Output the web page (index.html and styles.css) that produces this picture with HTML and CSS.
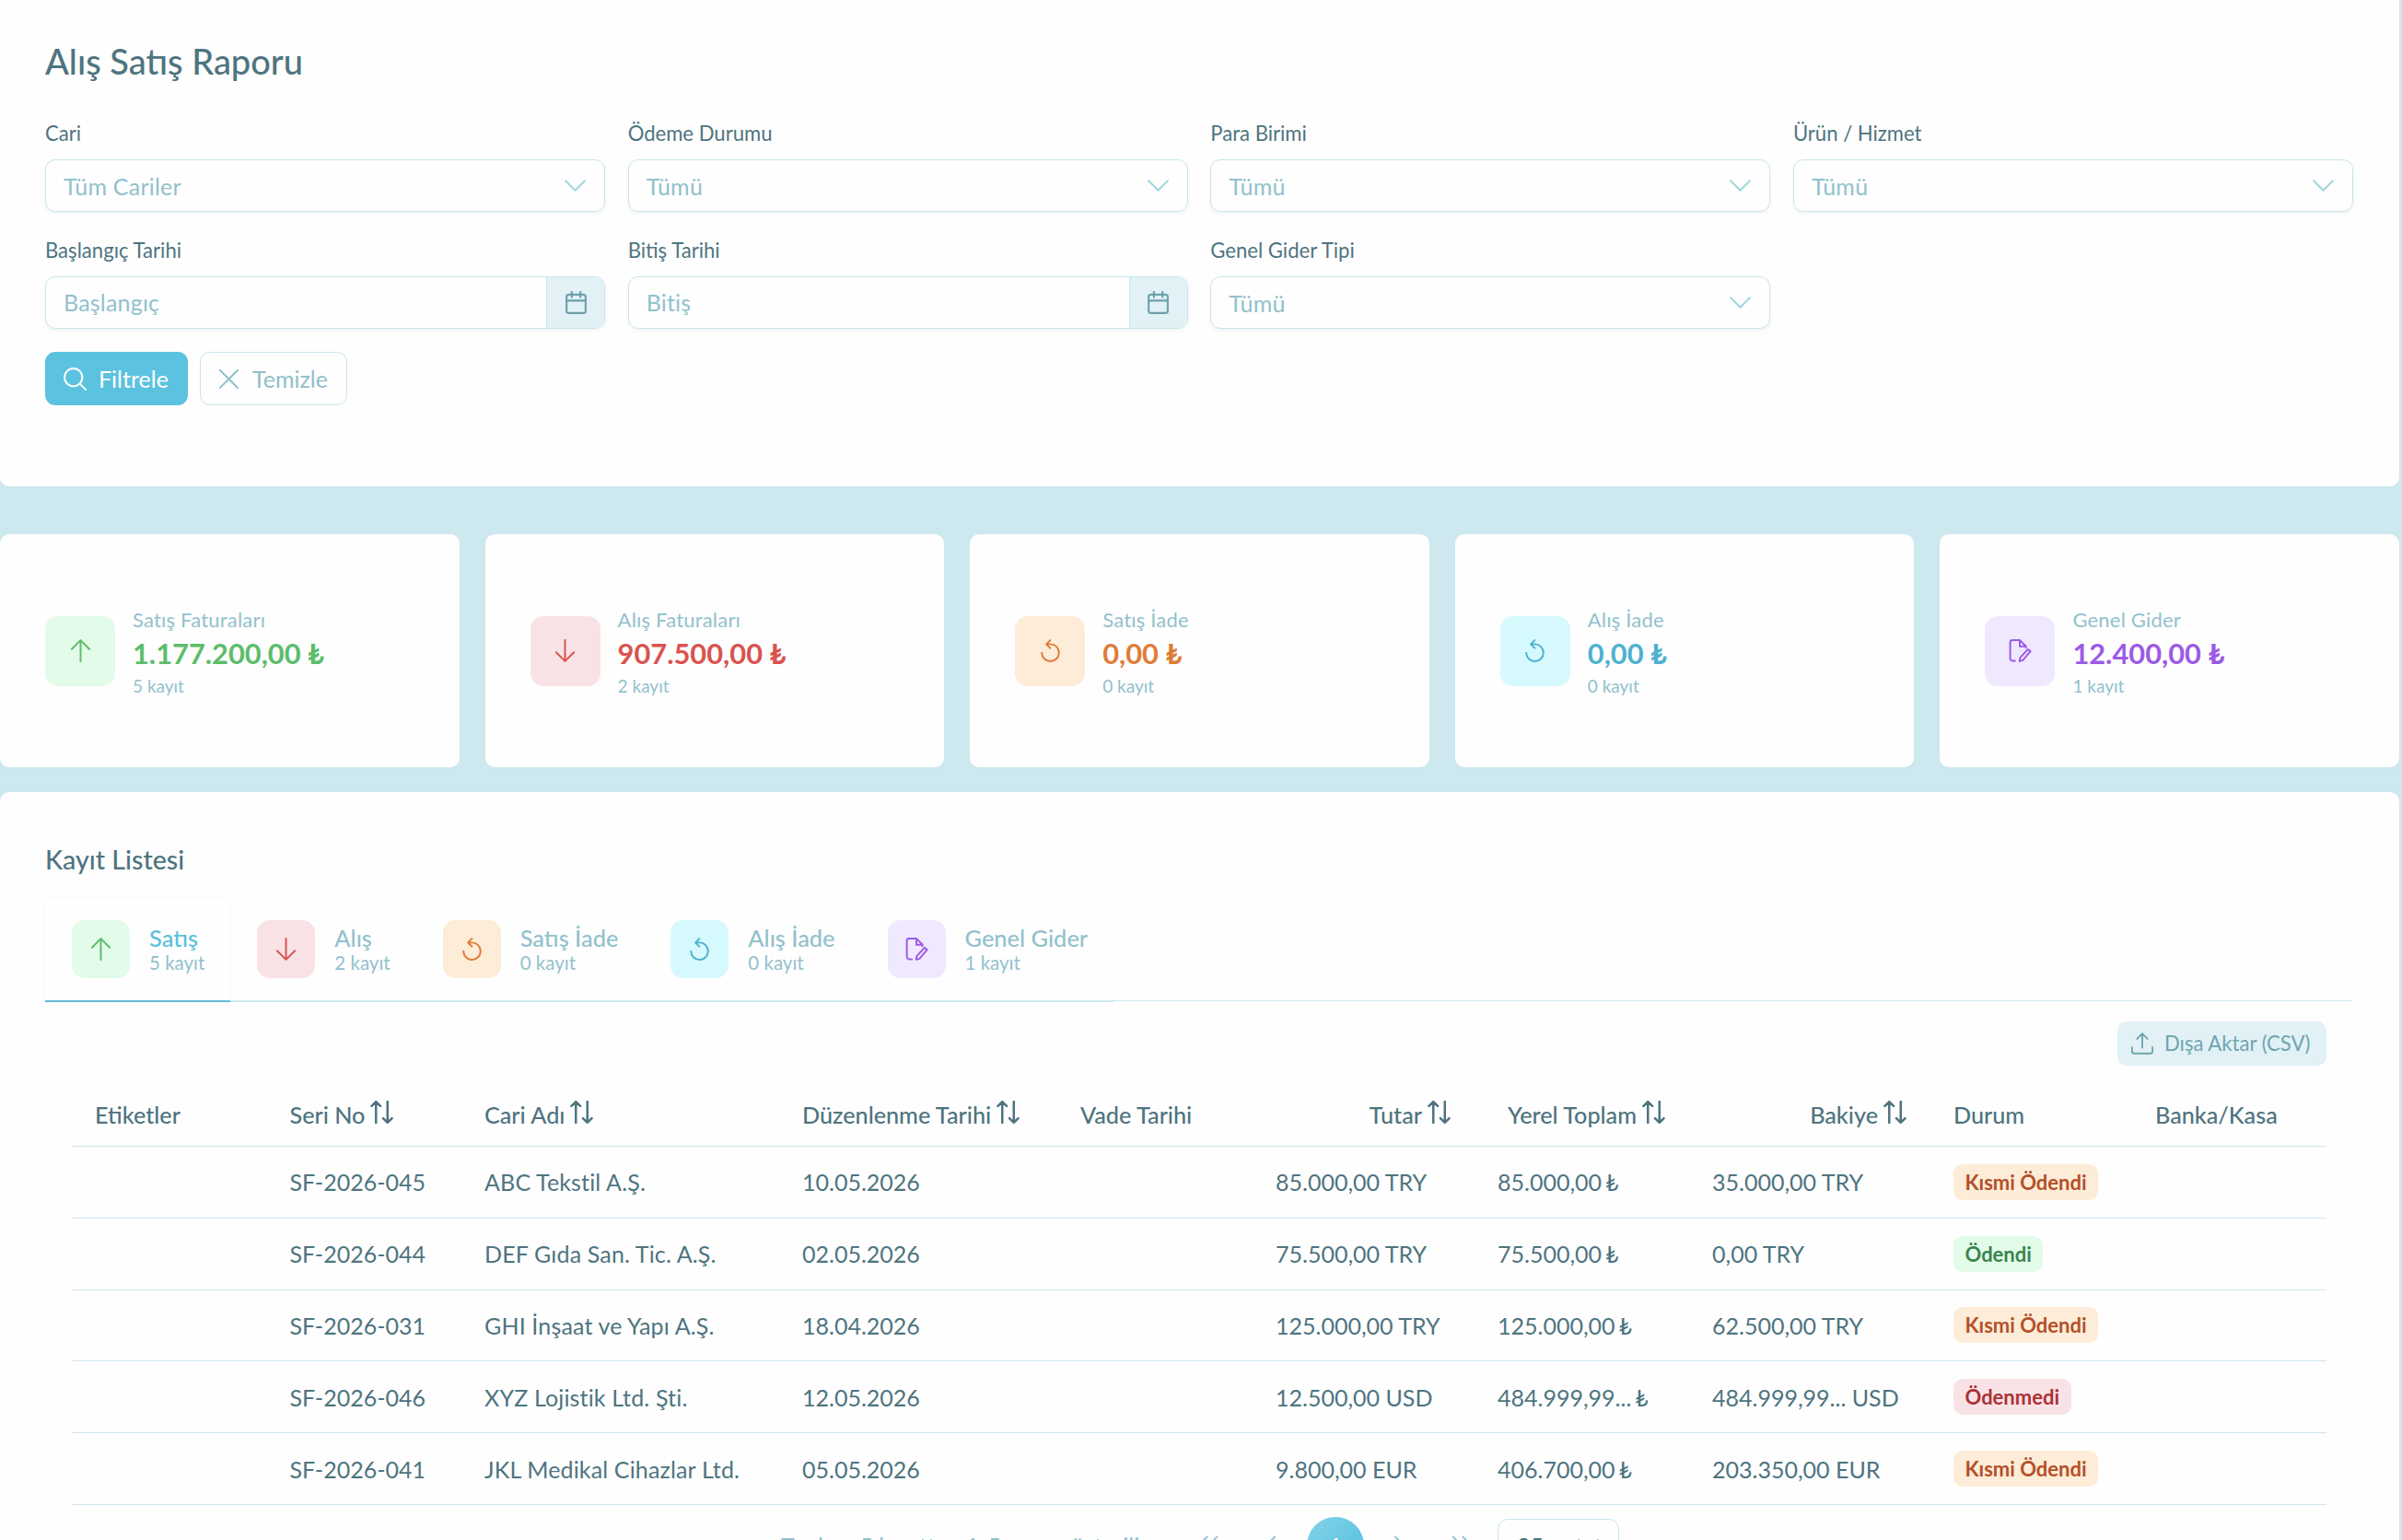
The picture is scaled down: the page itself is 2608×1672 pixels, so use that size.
FILE: index.html
```html
<!DOCTYPE html>
<html lang="tr">
<head>
  <meta charset="UTF-8" />
  <meta name="viewport" content="width=device-width, initial-scale=1.0"/>
  <title>Alış Satış Raporu</title>
  <link rel="stylesheet" href="styles.css">
</head>
<body>
<svg class="sprite" xmlns="http://www.w3.org/2000/svg">
  <symbol id="chevron" viewBox="0 0 14 14"><path d="M1.2 4.1 7 9.9l5.8-5.8"/></symbol>
  <symbol id="calendar" viewBox="0 0 14 14"><rect x="1.2" y="2.2" width="11.6" height="11.2" rx="1.4"/><path d="M1.2 5.8h11.6M4.4.5v3.2M9.6.5v3.2"/></symbol>
  <symbol id="search" viewBox="0 0 14 14"><circle cx="6" cy="6" r="5.4"/><path d="M9.9 9.9l3.6 3.6"/></symbol>
  <symbol id="times" viewBox="0 0 14 14"><path d="M1.6 1.6l10.8 10.8M12.4 1.6 1.6 12.4"/></symbol>
  <symbol id="up" viewBox="0 0 14 14"><path d="M7 13.5V.7M1.6 6 7 .6 12.4 6"/></symbol>
  <symbol id="down" viewBox="0 0 14 14"><path d="M7 .5v12.8M1.6 8 7 13.4 12.4 8"/></symbol>
  <symbol id="undo" viewBox="0 0 14 14"><path d="M6.9.6 4.5 3l2.4 2.4M4.5 3H7a5.2 5.2 0 1 1-5.2 5.2"/></symbol>
  <symbol id="file-edit" viewBox="0 0 14 14"><path d="M3.9 13.1H2.3C1.5 13.1.9 12.5.9 11.7V2C.9 1.1 1.5.6 2.3.6h4.5l3.6 3.6v1M6.7.8v3.5h3.6M11.7 6.1l1.5 1.3-4.6 5.4-2 .6.3-2.1z"/></symbol>
  <symbol id="sort" viewBox="0 0 14 14"><path d="M3.5 13.5V.8M.8 3.3 3.5.6l2.7 2.7M10.5.5v12.8M7.8 10.7l2.7 2.7 2.7-2.7"/></symbol>
  <symbol id="upload" viewBox="0 0 14 14"><path d="M.5 9.3v2.7c0 .8.5 1.3 1.3 1.3h10.4c.8 0 1.3-.5 1.3-1.3V9.3M7 9.6V.8M3.7 4 7 .7 10.3 4"/></symbol>
  <symbol id="angle-left" viewBox="0 0 14 14"><path d="M9 2 4 7l5 5"/></symbol>
  <symbol id="angle-right" viewBox="0 0 14 14"><path d="M5 2l5 5-5 5"/></symbol>
  <symbol id="angles-left" viewBox="0 0 14 14"><path d="M6.5 2l-5 5 5 5M12.5 2l-5 5 5 5"/></symbol>
  <symbol id="angles-right" viewBox="0 0 14 14"><path d="M1.5 2l5 5-5 5M7.5 2l5 5-5 5"/></symbol>
</svg>

<section class="card filter-card">
  <h1>Alış Satış Raporu</h1>
  <div class="filters">
    <div class="field">
      <label>Cari</label>
      <div class="select"><span>Tüm Cariler</span><svg class="icon"><use href="#chevron"/></svg></div>
    </div>
    <div class="field">
      <label>Ödeme Durumu</label>
      <div class="select"><span>Tümü</span><svg class="icon"><use href="#chevron"/></svg></div>
    </div>
    <div class="field">
      <label>Para Birimi</label>
      <div class="select"><span>Tümü</span><svg class="icon"><use href="#chevron"/></svg></div>
    </div>
    <div class="field">
      <label>Ürün / Hizmet</label>
      <div class="select"><span>Tümü</span><svg class="icon"><use href="#chevron"/></svg></div>
    </div>
    <div class="field">
      <label>Başlangıç Tarihi</label>
      <div class="select date"><span>Başlangıç</span><div class="date-btn"><svg class="icon"><use href="#calendar"/></svg></div></div>
    </div>
    <div class="field">
      <label>Bitiş Tarihi</label>
      <div class="select date"><span>Bitiş</span><div class="date-btn"><svg class="icon"><use href="#calendar"/></svg></div></div>
    </div>
    <div class="field">
      <label>Genel Gider Tipi</label>
      <div class="select"><span>Tümü</span><svg class="icon"><use href="#chevron"/></svg></div>
    </div>
  </div>
  <div class="actions">
    <button class="btn btn-primary"><svg class="icon"><use href="#search"/></svg>Filtrele</button>
    <button class="btn btn-outline"><svg class="icon"><use href="#times"/></svg>Temizle</button>
  </div>
</section>

<section class="summary">
  <div class="card stat green">
    <div class="tile"><svg class="icon"><use href="#up"/></svg></div>
    <div class="stat-text"><span class="stat-label">Satış Faturaları</span><strong>1.177.200,00 ₺</strong><small>5 kayıt</small></div>
  </div>
  <div class="card stat red">
    <div class="tile"><svg class="icon"><use href="#down"/></svg></div>
    <div class="stat-text"><span class="stat-label">Alış Faturaları</span><strong>907.500,00 ₺</strong><small>2 kayıt</small></div>
  </div>
  <div class="card stat orange">
    <div class="tile"><svg class="icon"><use href="#undo"/></svg></div>
    <div class="stat-text"><span class="stat-label">Satış İade</span><strong>0,00 ₺</strong><small>0 kayıt</small></div>
  </div>
  <div class="card stat cyan">
    <div class="tile"><svg class="icon"><use href="#undo"/></svg></div>
    <div class="stat-text"><span class="stat-label">Alış İade</span><strong>0,00 ₺</strong><small>0 kayıt</small></div>
  </div>
  <div class="card stat purple">
    <div class="tile"><svg class="icon"><use href="#file-edit"/></svg></div>
    <div class="stat-text"><span class="stat-label">Genel Gider</span><strong>12.400,00 ₺</strong><small>1 kayıt</small></div>
  </div>
</section>

<section class="card list-card">
  <h2>Kayıt Listesi</h2>
  <div class="tabs">
    <div class="tab active green">
      <div class="tile"><svg class="icon"><use href="#up"/></svg></div>
      <div class="tab-text"><span>Satış</span><small>5 kayıt</small></div>
    </div>
    <div class="tab red">
      <div class="tile"><svg class="icon"><use href="#down"/></svg></div>
      <div class="tab-text"><span>Alış</span><small>2 kayıt</small></div>
    </div>
    <div class="tab orange">
      <div class="tile"><svg class="icon"><use href="#undo"/></svg></div>
      <div class="tab-text"><span>Satış İade</span><small>0 kayıt</small></div>
    </div>
    <div class="tab cyan">
      <div class="tile"><svg class="icon"><use href="#undo"/></svg></div>
      <div class="tab-text"><span>Alış İade</span><small>0 kayıt</small></div>
    </div>
    <div class="tab purple">
      <div class="tile"><svg class="icon"><use href="#file-edit"/></svg></div>
      <div class="tab-text"><span>Genel Gider</span><small>1 kayıt</small></div>
    </div>
  </div>

  <div class="tab-panel">
    <div class="toolbar">
      <button class="btn-export"><svg class="icon"><use href="#upload"/></svg>Dışa Aktar (CSV)</button>
    </div>
    <table>
      <colgroup>
        <col class="c-tag"><col class="c-no"><col class="c-name"><col class="c-date"><col class="c-due">
        <col class="c-amount"><col class="c-local"><col class="c-balance"><col class="c-status"><col class="c-bank">
      </colgroup>
      <thead>
        <tr>
          <th>Etiketler</th>
          <th>Seri No<svg class="icon sort"><use href="#sort"/></svg></th>
          <th>Cari Adı<svg class="icon sort"><use href="#sort"/></svg></th>
          <th>Düzenlenme Tarihi<svg class="icon sort"><use href="#sort"/></svg></th>
          <th>Vade Tarihi</th>
          <th class="right">Tutar<svg class="icon sort"><use href="#sort"/></svg></th>
          <th class="right">Yerel Toplam<svg class="icon sort"><use href="#sort"/></svg></th>
          <th class="right">Bakiye<svg class="icon sort"><use href="#sort"/></svg></th>
          <th>Durum</th>
          <th>Banka/Kasa</th>
        </tr>
      </thead>
      <tbody>
        <tr><td></td><td>SF-2026-045</td><td class="name">ABC Tekstil A.Ş.</td><td>10.05.2026</td><td></td><td>85.000,00 TRY</td><td class="local">85.000,00 ₺</td><td>35.000,00 TRY</td><td><span class="badge warn">Kısmi Ödendi</span></td><td></td></tr>
        <tr><td></td><td>SF-2026-044</td><td class="name">DEF Gıda San. Tic. A.Ş.</td><td>02.05.2026</td><td></td><td>75.500,00 TRY</td><td class="local">75.500,00 ₺</td><td>0,00 TRY</td><td><span class="badge ok">Ödendi</span></td><td></td></tr>
        <tr><td></td><td>SF-2026-031</td><td class="name">GHI İnşaat ve Yapı A.Ş.</td><td>18.04.2026</td><td></td><td>125.000,00 TRY</td><td class="local">125.000,00 ₺</td><td>62.500,00 TRY</td><td><span class="badge warn">Kısmi Ödendi</span></td><td></td></tr>
        <tr><td></td><td>SF-2026-046</td><td class="name">XYZ Lojistik Ltd. Şti.</td><td>12.05.2026</td><td></td><td>12.500,00 USD</td><td class="local">484.999,99... ₺</td><td>484.999,99... USD</td><td><span class="badge danger">Ödenmedi</span></td><td></td></tr>
        <tr><td></td><td>SF-2026-041</td><td class="name">JKL Medikal Cihazlar Ltd.</td><td>05.05.2026</td><td></td><td>9.800,00 EUR</td><td class="local">406.700,00 ₺</td><td>203.350,00 EUR</td><td><span class="badge warn">Kısmi Ödendi</span></td><td></td></tr>
      </tbody>
    </table>
    <div class="paginator">
      <span class="report">Toplam 5 kayıttan 1-5 arası gösteriliyor</span>
      <span class="page"><svg class="icon"><use href="#angles-left"/></svg></span>
      <span class="page"><svg class="icon"><use href="#angle-left"/></svg></span>
      <span class="page current">1</span>
      <span class="page"><svg class="icon"><use href="#angle-right"/></svg></span>
      <span class="page"><svg class="icon"><use href="#angles-right"/></svg></span>
      <div class="page-size"><span>25</span><svg class="icon"><use href="#chevron"/></svg></div>
    </div>
  </div>
</section>
</body>
</html>
```

FILE: styles.css
```css
* {
  box-sizing: border-box;
}
body {
  margin: 0;
  height: 1672px;
  overflow: hidden;
  padding-right: 3px;
  background-color: #cde8ee;
  color: #4e7480;
  font-family: Lato, sans-serif;
  font-size: 25px;
  line-height: 30px;
  font-variant-ligatures: none;
}
h1, h2 {
  margin: 0;
  font-weight: 500;
}
h1, h2, label, th, .tab-text span {
  font-variant-ligatures: normal;
}
button {
  font-family: inherit;
  border: none;
}
.sprite {
  display: none;
}
.icon {
  width: 25px;
  height: 25px;
  flex: none;
  fill: none;
  stroke: currentColor;
  stroke-width: 1.1;
  stroke-linecap: round;
  stroke-linejoin: round;
}
.card {
  background-color: #fefefe;
  border-radius: 10px;
}

/* filters */
.filter-card {
  height: 528px;
  padding: 43px 50px 0 49px;
  border-top-left-radius: 0;
  border-top-right-radius: 0;
}
h1 {
  font-size: 38px;
  line-height: 46px;
}
.filters {
  display: grid;
  grid-template-columns: repeat(4, 1fr);
  gap: 25px 24.5px;
  margin-top: 42px;
}
.field label {
  display: block;
  height: 42px;
  font-size: 22.1px;
  line-height: 28px;
}
.select {
  display: flex;
  align-items: center;
  justify-content: space-between;
  height: 57px;
  padding: 0 19px;
  border: 1px solid #c6e6ed;
  border-radius: 11px;
  box-shadow: 0 2px 4px rgba(18, 18, 23, 0.05);
  color: #92c1cd;
}
.select span {
  letter-spacing: 0.2px;
}
.field:nth-child(n+5) {
  margin-top: 3px;
}
.select .icon {
  color: #a5d5df;
  stroke-width: 1.2;
}
.date {
  padding-right: 0;
}
.date > span {
  padding-bottom: 1px;
}
.date-btn {
  display: flex;
  align-items: center;
  justify-content: center;
  width: 63px;
  height: 100%;
  background-color: #e1f1f6;
  border-left: 1px solid #c6e6ed;
  border-radius: 0 10px 10px 0;
}
.date-btn .icon {
  color: #6fa0aa;
}
.actions {
  display: flex;
  gap: 13px;
  margin-top: 25px;
}
.btn {
  display: flex;
  align-items: center;
  gap: 13px;
  height: 58px;
  padding: 0 20px;
  border-radius: 11px;
  font-size: 25px;
}
.btn-primary {
  width: 155px;
  background-color: #5bc2df;
  color: #fff;
}
.btn-outline {
  width: 160px;
  padding: 0 18px;
  background-color: transparent;
  border: 1px solid #c6e6ed;
  color: #8fbfcb;
}

/* summary cards */
.summary {
  display: grid;
  grid-template-columns: repeat(5, 1fr);
  gap: 28px;
  margin: 52px 0 27px;
}
.stat {
  display: flex;
  align-items: center;
  height: 253px;
  padding: 0 49px;
  gap: 19px;
}
.tile {
  display: flex;
  align-items: center;
  justify-content: center;
  width: 76px;
  height: 76px;
  border-radius: 14px;
}
.stat-text {
  display: flex;
  flex-direction: column;
  padding-top: 2px;
}
.stat-label {
  font-size: 22px;
  line-height: 33px;
  letter-spacing: 0.2px;
  color: #92c1cd;
}
.stat-text strong {
  font-size: 30.8px;
  line-height: 42px;
}
.stat-text small {
  font-size: 19px;
  line-height: 28px;
  color: #92c1cd;
}
.green .tile { background-color: #e3fbe9; }
.red .tile { background-color: #f9e2e5; }
.orange .tile { background-color: #fdecd7; }
.cyan .tile { background-color: #d6f9fe; }
.purple .tile { background-color: #f0e8fe; }
.green .tile, .green strong { color: #5cbd6b; }
.red .tile, .red strong { color: #d9534f; }
.orange .tile, .orange strong { color: #e07c39; }
.cyan .tile, .cyan strong { color: #4fb1d0; }
.purple .tile, .purple strong { color: #9c5ae6; }

/* list */
.list-card {
  padding: 55px 51px 0 49px;
  height: 812px;
  overflow: hidden;
  border-bottom-left-radius: 0;
  border-bottom-right-radius: 0;
}
h2 {
  font-size: 28.6px;
  line-height: 36px;
}
.tabs {
  display: flex;
  height: 112px;
  margin-top: 24px;
  border-bottom: 1px solid #cde8ef;
}
.tab {
  display: flex;
  align-items: center;
  gap: 21px;
  height: 113px;
  padding: 0 28px 1px 29px;
  border-bottom: 2px solid #cde8ef;
  color: #92c1cd;
}
.tab.active {
  border-bottom-color: #62bcd6;
  box-shadow: 0 0 2px rgba(18, 18, 23, 0.06);
}
.tab .tile {
  width: 63px;
  height: 63px;
}
.tab-text {
  display: flex;
  flex-direction: column;
}
.tab-text span {
  font-size: 25.4px;
  font-weight: 500;
  line-height: 30px;
}
.tab-text small {
  font-size: 20.5px;
  line-height: 25px;
}
.active .tab-text span {
  color: #5bbfdc;
}
.tab-panel {
  padding: 22px 28px 0 29px;
}
.toolbar {
  display: flex;
  justify-content: flex-end;
}
.btn-export {
  display: flex;
  align-items: center;
  gap: 12px;
  width: 227px;
  height: 48px;
  padding: 0 15px 1px;
  border-radius: 10px;
  background-color: #e1f1f6;
  color: #70a4ae;
  font-size: 22.1px;
  white-space: nowrap;
}
.btn-export .icon {
  width: 24px;
  height: 24px;
}
table {
  width: 100%;
  margin-top: 20px;
  table-layout: fixed;
  border-collapse: separate;
  border-spacing: 0;
}
.c-tag { width: 211.5px; }
.c-no { width: 211.5px; }
.c-name { width: 345px; }
.c-date { width: 302px; }
.c-due { width: 212px; }
.c-amount { width: 241px; }
.c-local { width: 233px; }
.c-balance { width: 262px; }
.c-status { width: 219px; }
th, td {
  padding: 0 0 0 25px;
  border-bottom: 1px solid #cfe6ef;
  text-align: left;
  white-space: nowrap;
}
th {
  height: 68px;
  padding-bottom: 2px;
  font-size: 25.2px;
  font-weight: 500;
}
td {
  height: 77.8px;
}
.name {
  letter-spacing: 0.15px;
}
.local {
  word-spacing: -2.5px;
}
th.right {
  text-align: right;
  padding: 0 26px 2px 0;
}
.sort {
  margin-left: 6px;
  vertical-align: 0;
  stroke-width: 1.4;
}
.badge {
  display: inline-block;
  height: 39px;
  padding: 0 12.5px;
  border-radius: 10px;
  font-size: 22px;
  font-weight: 700;
  line-height: 39px;
  vertical-align: middle;
}
.warn { background-color: #fdecd7; color: #b4502a; }
.ok { background-color: #e3fbe9; color: #3a8350; }
.danger { background-color: #f9e2e5; color: #ab3136; }

.paginator {
  display: flex;
  align-items: center;
  justify-content: center;
  gap: 7px;
  height: 88px;
  padding-left: 2px;
  color: #92c1cd;
}
.page {
  display: flex;
  align-items: center;
  justify-content: center;
  width: 62px;
  height: 62px;
}
.report {
  margin-right: 1px;
}
.current {
  border-radius: 50%;
  background: linear-gradient(135deg, #85d2e8, #4fbedd);
  color: #fff;
}
.page-size {
  display: flex;
  align-items: center;
  justify-content: space-between;
  width: 132px;
  height: 57px;
  padding: 0 20px;
  border: 1px solid #c6e6ed;
  border-radius: 11px;
  color: #4e7480;
}
```
